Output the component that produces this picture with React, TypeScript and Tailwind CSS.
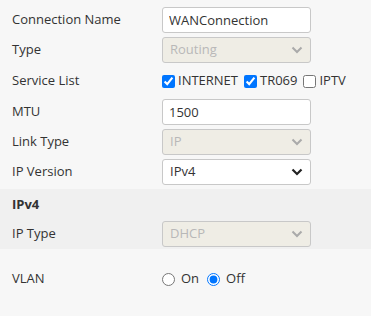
import React from 'react';

const Chevron = ({ dark }: { dark?: boolean }) => (
  <svg
    className="pointer-events-none absolute right-[8px] top-1/2 -translate-y-1/2"
    width="12"
    height="8"
    viewBox="0 0 12 8"
  >
    <path
      d="M1.5 1.5 L6 6 L10.5 1.5"
      fill="none"
      stroke={dark ? '#222' : '#aaa'}
      strokeWidth={dark ? 2.2 : 2}
    />
  </svg>
);

function Row({
  label,
  children,
  h = 'h-[26px]',
  mb = 'mb-[4px]',
}: {
  label: string;
  children: React.ReactNode;
  h?: string;
  mb?: string;
}) {
  return (
    <div className={`flex items-center ${h} ${mb}`}>
      <div className="w-[150px] shrink-0">{label}</div>
      <div className="flex items-center">{children}</div>
    </div>
  );
}

function Select({ value, disabled }: { value: string; disabled?: boolean }) {
  return (
    <div className="relative">
      <select
        disabled={disabled}
        defaultValue={value}
        className={`appearance-none w-[149px] h-[26px] rounded-[3px] border border-[#c8c8c8] pl-[7px] outline-none ${
          disabled ? 'bg-[#efede5] text-[#b8b8b8]' : 'bg-white text-[#333]'
        }`}
      >
        <option>{value}</option>
      </select>
      <Chevron dark={!disabled} />
    </div>
  );
}

export default function App() {
  return (
    <div
      className="w-[371px] h-[316px] bg-[#f7f7f7] text-[#333] text-[13px] overflow-hidden"
      style={{ fontFamily: '"Open Sans", sans-serif' }}
    >
      <div className="pl-[12px] pt-[7px]">
        <Row label="Connection Name">
          <input
            defaultValue="WANConnection"
            className="w-[149px] h-[26px] rounded-[3px] border border-[#c8c8c8] bg-white pl-[6px] text-[#333] outline-none"
          />
        </Row>
        <Row label="Type">
          <Select value="Routing" disabled />
        </Row>
        <Row label="Service List" h="h-[28px]">
          <label className="flex items-center mr-[6px]">
            <input type="checkbox" defaultChecked className="w-[13px] h-[13px] m-0 mr-[3px]" />
            INTERNET
          </label>
          <label className="flex items-center mr-[6px]">
            <input type="checkbox" defaultChecked className="w-[13px] h-[13px] m-0 mr-[3px]" />
            TR069
          </label>
          <label className="flex items-center">
            <input type="checkbox" className="w-[13px] h-[13px] m-0 mr-[3px]" />
            IPTV
          </label>
        </Row>
        <Row label="MTU">
          <input
            defaultValue="1500"
            className="w-[149px] h-[26px] rounded-[3px] border border-[#c8c8c8] bg-white pl-[6px] text-[#333] outline-none"
          />
        </Row>
        <Row label="Link Type">
          <Select value="IP" disabled />
        </Row>
        <Row label="IP Version">
          <Select value="IPv4" />
        </Row>
      </div>

      <div className="bg-[#f0f0f0] pl-[12px] pb-[2px]">
        <div className="h-[32px] flex items-center font-bold">IPv4</div>
        <Row label="IP Type" mb="mb-0">
          <Select value="DHCP" disabled />
        </Row>
      </div>

      <div className="pl-[12px] pt-[17px]">
        <Row label="VLAN">
          <label className="flex items-center mr-[8px]">
            <input type="radio" name="vlan" className="w-[13px] h-[13px] m-0 mr-[6px]" />
            On
          </label>
          <label className="flex items-center">
            <input type="radio" name="vlan" defaultChecked className="w-[13px] h-[13px] m-0 mr-[6px]" />
            Off
          </label>
        </Row>
      </div>
    </div>
  );
}
